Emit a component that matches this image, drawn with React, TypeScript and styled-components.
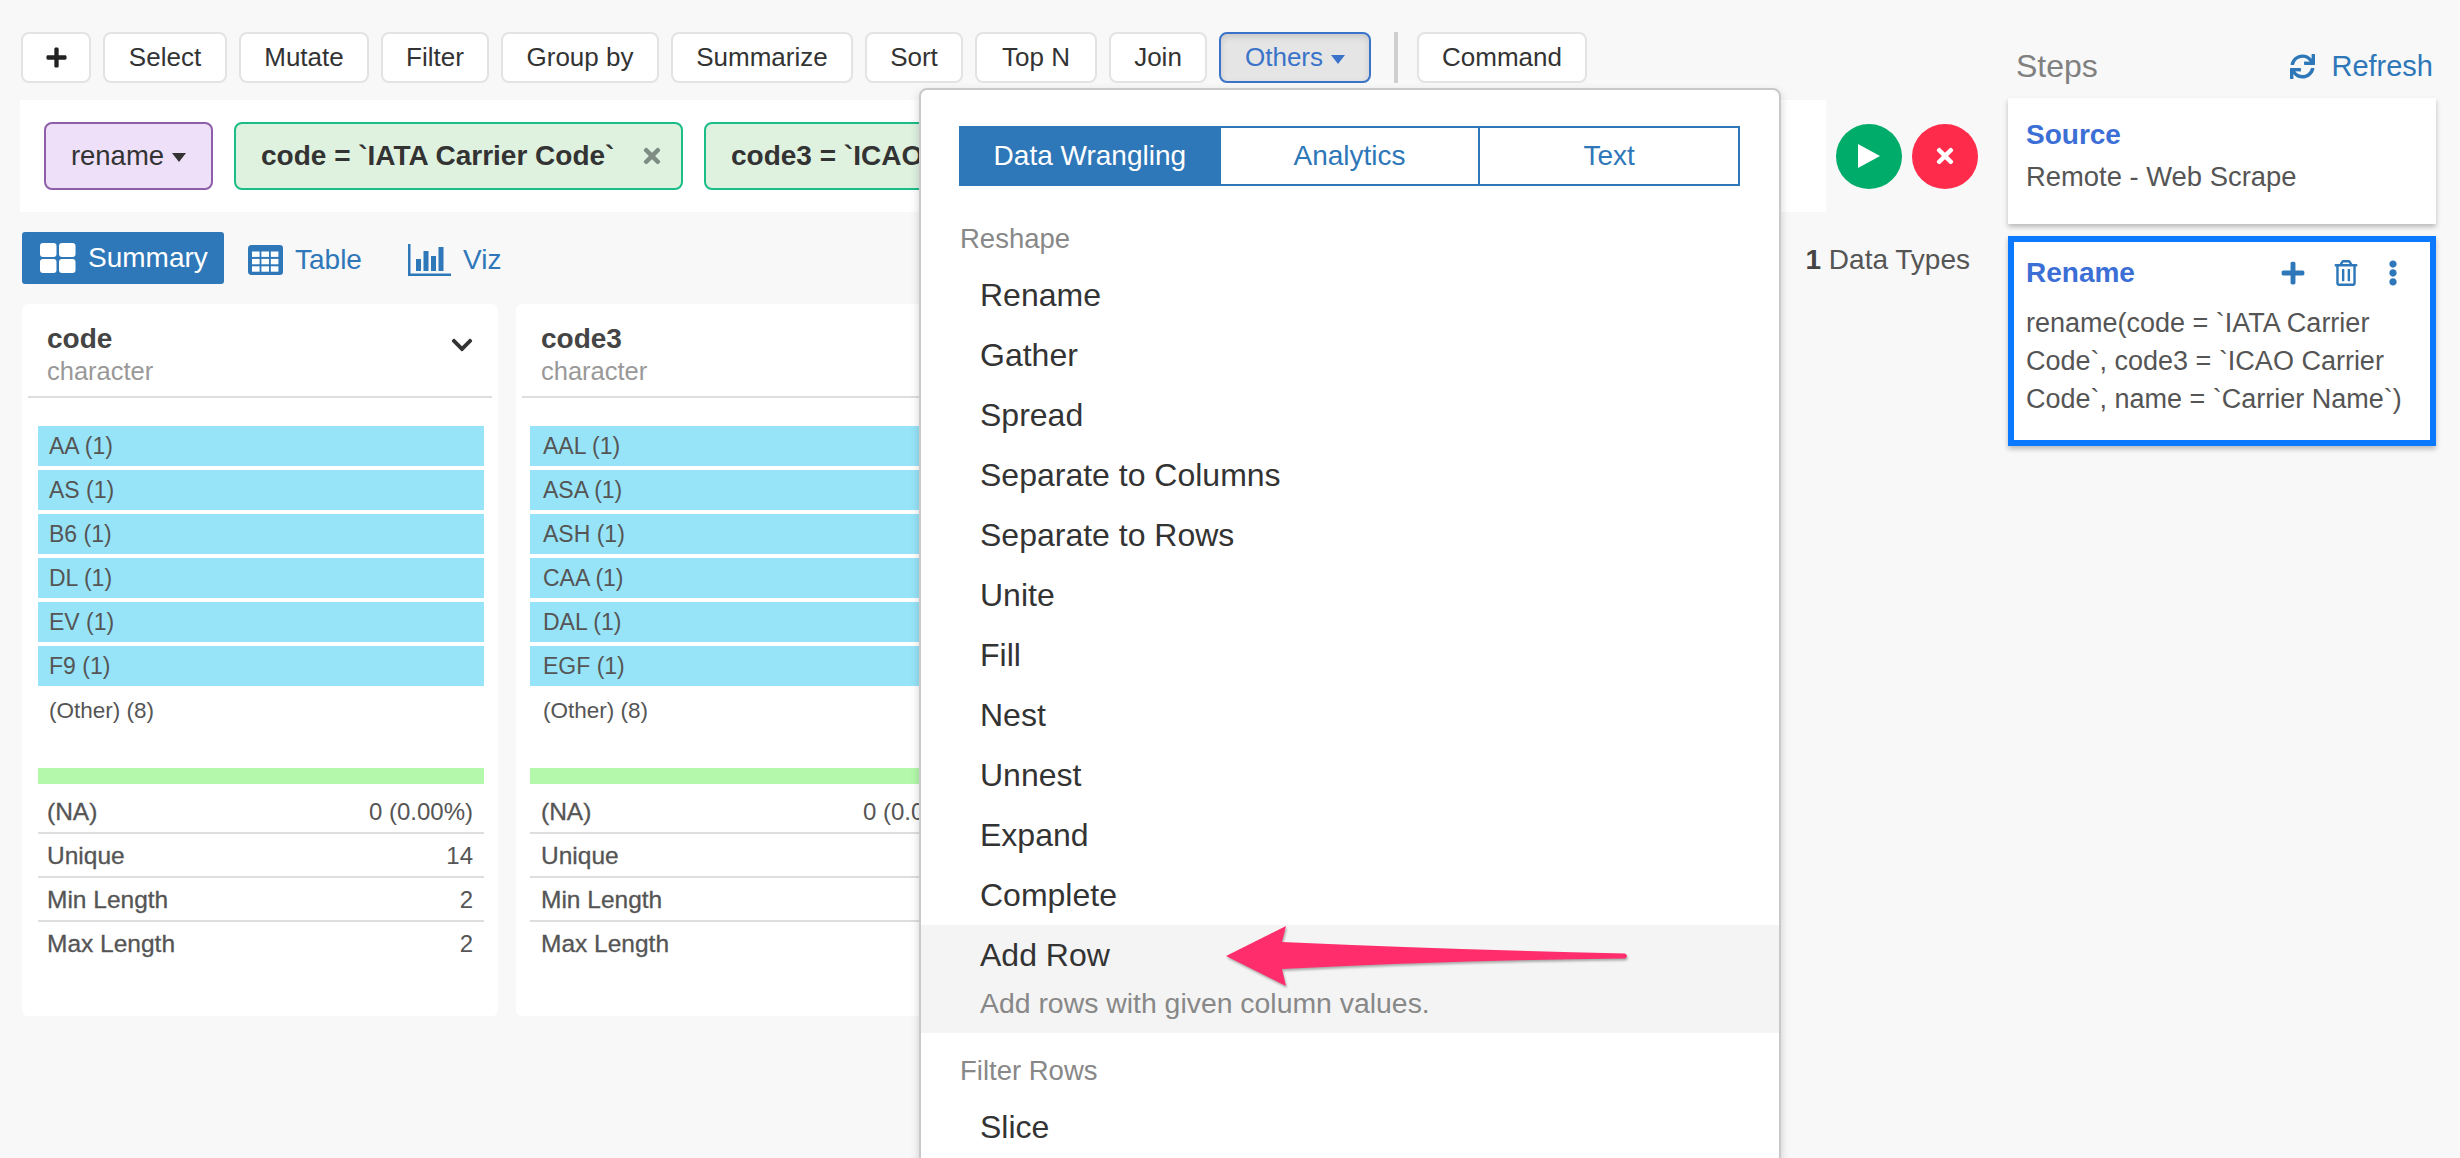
import React from "react";
import styled, { createGlobalStyle } from "styled-components";
import { FaPlus, FaTimes, FaChevronDown, FaSync, FaRegTrashAlt, FaEllipsisV } from "react-icons/fa";

const Global = createGlobalStyle`
  html, body { margin: 0; padding: 0; background: #f8f8f8; }
  body { font-family: "Liberation Sans", Arial, sans-serif; color: #333; }
  * { box-sizing: border-box; }
`;

const Page = styled.div`
  position: relative;
  display: flex;
  width: 2460px;
  height: 1158px;
  overflow: hidden;
  background: #f8f8f8;
`;
const Main = styled.div`
  width: 1988px;
  padding: 32px 0 0 20px;
  flex: none;
`;
const Toolbar = styled.div`
  display: flex;
  align-items: center;
  gap: 12px;
  padding-left: 1px;
  height: 51px;
`;
const ToolButton = styled.div<{ $active?: boolean; $w: number }>`
  width: ${(p) => p.$w}px;
  height: 51px;
  display: flex;
  align-items: center;
  justify-content: center;
  gap: 8px;
  font-size: 26px;
  border-radius: 8px;
  border: 2px solid ${(p) => (p.$active ? "#3a73c9" : "#e3e3e3")};
  background: ${(p) => (p.$active ? "#e5e5e5" : "#fff")};
  color: ${(p) => (p.$active ? "#3a73c9" : "#333")};
  box-shadow: ${(p) => (p.$active ? "inset 0 3px 6px rgba(0,0,0,.13)" : "none")};
`;
const Caret = styled.span<{ $c: string }>`
  display: inline-block;
  margin-top: 3px;
  border-left: 7.5px solid transparent;
  border-right: 7.5px solid transparent;
  border-top: 9px solid ${(p) => p.$c};
`;
const Sep = styled.div`
  width: 4px;
  height: 51px;
  margin: 0 7px 0 11px;
  background: #cfcfcf;
`;
const FilterRow = styled.div`
  display: flex;
  align-items: center;
  margin-top: 17px;
`;
const FilterPanel = styled.div`
  width: 1806px;
  height: 112px;
  padding: 22px 24px;
  background: #fff;
  display: flex;
  gap: 21px;
  overflow: hidden;
  flex: none;
`;
const VerbChip = styled.div`
  width: 169px;
  height: 68px;
  flex: none;
  display: flex;
  align-items: center;
  justify-content: center;
  gap: 8px;
  font-size: 27.5px;
  background: #eee0f9;
  border: 2px solid #8e5ea8;
  border-radius: 8px;
  color: #333;
`;
const ArgChip = styled.div<{ $w: number }>`
  width: ${(p) => p.$w}px;
  height: 68px;
  flex: none;
  display: flex;
  align-items: center;
  justify-content: space-between;
  padding: 0 17.5px 0 25px;
  font-size: 28px;
  font-weight: 700;
  color: #333;
  background: #dff2e0;
  border: 2px solid #1abc88;
  border-radius: 8px;
  white-space: nowrap;
`;
const ChipClose = styled(FaTimes)`
  color: #7f8c84;
  font-size: 24px;
  flex: none;
`;
const RunButton = styled.div<{ $bg: string; $ml: number }>`
  width: 66px;
  height: 65px;
  border-radius: 50%;
  flex: none;
  margin-left: ${(p) => p.$ml}px;
  background: ${(p) => p.$bg};
  display: flex;
  align-items: center;
  justify-content: center;
  color: #fff;
  font-size: 24px;
`;
const ViewRow = styled.div`
  display: flex;
  align-items: center;
  height: 52px;
  margin-top: 20px;
  padding-left: 2px;
`;
const ViewTab = styled.div<{ $active?: boolean; $w: number; $ml?: number }>`
  width: ${(p) => p.$w}px;
  height: 52px;
  margin-left: ${(p) => p.$ml ?? 0}px;
  padding: ${(p) => (p.$active ? "0 0 0 18px" : "3px 0 0 0")};
  display: flex;
  align-items: center;
  gap: 12px;
  font-size: 28px;
  border-radius: 3px;
  background: ${(p) => (p.$active ? "#2e77b8" : "transparent")};
  color: ${(p) => (p.$active ? "#fff" : "#2e77b8")};
`;
const TypesCount = styled.div`
  margin-left: auto;
  margin-right: 18px;
  padding-top: 4px;
  font-size: 28px;
  color: #555;
  white-space: nowrap;
  & b { color: #444; }
`;
const Cards = styled.div`
  display: flex;
  gap: 18px;
  margin-top: 20px;
  padding-left: 2px;
`;
const Card = styled.div`
  width: 476px;
  height: 712px;
  flex: none;
  background: #fff;
  border-radius: 6px;
  padding: 0 6px;
`;
const CardHead = styled.div`
  position: relative;
  height: 94px;
  border-bottom: 2px solid #dedede;
  padding: 19px 0 0 19px;
`;
const CardTitle = styled.div`
  font-size: 28px;
  line-height: 32px;
  font-weight: 700;
  color: #444;
`;
const CardType = styled.div`
  font-size: 25.5px;
  line-height: 33px;
  color: #999;
`;
const CardChevron = styled(FaChevronDown)`
  position: absolute;
  right: 18px;
  top: 29px;
  font-size: 24px;
  color: #333;
`;
const CardBody = styled.div<{ $inset: number }>`
  --inset: ${(p) => p.$inset}px;
  padding: 28px 8px 0 ${(p) => 10 - p.$inset}px;
`;
const Bar = styled.div`
  height: 40px;
  margin-bottom: 4px;
  padding-left: calc(11px + var(--inset));
  background: #97e4f8;
  font-size: 23px;
  line-height: 40px;
  color: #555;
`;
const OtherRow = styled.div`
  height: 40px;
  padding-left: calc(11px + var(--inset));
  font-size: 22.5px;
  line-height: 42px;
  color: #555;
`;
const NaBar = styled.div`
  height: 16px;
  margin-top: 38px;
  background: #b4f8ac;
`;
const StatList = styled.div`
  margin-top: 6px;
`;
const StatRow = styled.div<{ $last?: boolean }>`
  height: 44px;
  display: flex;
  align-items: center;
  justify-content: space-between;
  padding: ${(p) => (p.$last ? "0" : "2px")} 11px 0 calc(9px + var(--inset));
  font-size: 24px;
  color: #555;
  border-bottom: ${(p) => (p.$last ? "none" : "2px solid #dedede")};
`;
const StatLabel = styled.span`
  font-size: 24.5px;
  -webkit-text-stroke: 0.3px #555;
`;
const Aside = styled.div`
  width: 428px;
  margin-left: 20px;
  flex: none;
  padding-top: 47px;
`;
const AsideHead = styled.div`
  display: flex;
  align-items: center;
  justify-content: space-between;
  height: 38px;
  padding: 0 3px 0 8px;
  margin-bottom: 13px;
`;
const StepsTitle = styled.div`
  font-size: 32px;
  color: #808080;
`;
const RefreshLink = styled.div`
  display: flex;
  align-items: center;
  gap: 16px;
  font-size: 29px;
  color: #2e77b8;
`;
const StepCard = styled.div<{ $selected?: boolean; $h: number }>`
  height: ${(p) => p.$h}px;
  margin-bottom: 12px;
  padding: ${(p) => (p.$selected ? "13px 12px" : "19px 18px")};
  background: #fff;
  border: ${(p) => (p.$selected ? "6px solid #0a78ff" : "none")};
  box-shadow: 0 3px 5px rgba(0, 0, 0, 0.25);
`;
const StepHead = styled.div`
  display: flex;
  align-items: center;
  justify-content: space-between;
  height: 36px;
`;
const StepTitle = styled.div`
  font-size: 28px;
  font-weight: 700;
  color: #3b6fd6;
`;
const StepIcons = styled.div`
  display: flex;
  align-items: center;
  color: #2e77b8;
  font-size: 26px;
  gap: 26.5px;
  padding-right: 12.5px;
`;
const StepDots = styled(FaEllipsisV)`
  margin-left: -5.5px;
`;
const StepText = styled.div<{ $mt: number; $fs: number }>`
  font-size: ${(p) => p.$fs}px;
  line-height: 38px;
  color: #555;
  margin-top: ${(p) => p.$mt}px;
`;
const Menu = styled.div`
  position: absolute;
  left: 919px;
  top: 88px;
  width: 862px;
  height: 1100px;
  background: #fff;
  border: 2px solid #c9c9c9;
  border-radius: 8px;
  box-shadow: 0 4px 10px rgba(0, 0, 0, 0.18);
  padding-top: 36px;
`;
const MenuTabs = styled.div`
  display: flex;
  height: 60px;
  margin: 0 39px 0 38px;
  border: 2px solid #2e77b8;
`;
const MenuTab = styled.div<{ $active?: boolean }>`
  flex: 1;
  display: flex;
  align-items: center;
  justify-content: center;
  font-size: 28px;
  background: ${(p) => (p.$active ? "#2e77b8" : "#fff")};
  color: ${(p) => (p.$active ? "#fff" : "#2e77b8")};
  & + & { border-left: 2px solid #2e77b8; }
`;
const GroupLabel = styled.div<{ $mt: number }>`
  height: 36px;
  line-height: 36px;
  margin-top: ${(p) => p.$mt}px;
  margin-bottom: 8px;
  padding-left: 39px;
  font-size: 27.5px;
  color: #888;
`;
const MenuItem = styled.div`
  height: 60px;
  line-height: 60px;
  padding-left: 59px;
  font-size: 32px;
  color: #333;
`;
const MenuItemHot = styled.div`
  height: 108px;
  background: #f4f4f4;
  padding-left: 59px;
`;
const HotTitle = styled.div`
  height: 60px;
  line-height: 60px;
  font-size: 32px;
  color: #333;
`;
const HotDesc = styled.div`
  height: 36px;
  line-height: 36px;
  font-size: 28.4px;
  color: #888;
`;
const ArrowMark = styled.svg`
  position: absolute;
  left: 1220px;
  top: 920px;
  filter: drop-shadow(1px 2px 1px rgba(0, 0, 0, 0.3));
`;

const SummaryIcon = () => (
  <svg width="36" height="30" viewBox="0 0 36 30" fill="#fff">
    <rect x="0" y="0" width="16.5" height="14" rx="3" />
    <rect x="19" y="0" width="16.5" height="14" rx="3" />
    <rect x="0" y="16" width="16.5" height="14" rx="3" />
    <rect x="19" y="16" width="16.5" height="14" rx="3" />
  </svg>
);
const TableIcon = () => (
  <svg width="35" height="30" viewBox="0 0 35 30" fill="none">
    <rect x="1.2" y="1.2" width="32.6" height="27.6" rx="2" stroke="#2e77b8" strokeWidth="2.4" fill="#2e77b8" />
    {[0, 1, 2].map((r) =>
      [0, 1, 2].map((c) => (
        <rect key={`${r}-${c}`} x={4 + c * 9.4} y={6.5 + r * 7.4} width="7.6" height="5.4" fill="#fff" />
      ))
    )}
  </svg>
);
const ChartIcon = () => (
  <svg width="43" height="32" viewBox="0 0 43 32" fill="#2e77b8">
    <rect x="0" y="0" width="2.5" height="32" />
    <rect x="0" y="29.5" width="43" height="2.5" />
    <rect x="8" y="15" width="5" height="12" />
    <rect x="15.5" y="7" width="5" height="20" />
    <rect x="23" y="12" width="5" height="15" />
    <rect x="30.5" y="3" width="5" height="24" />
  </svg>
);
const PlayIcon = () => (
  <svg width="22" height="24" viewBox="0 0 22 24">
    <path d="M0 0 L22 12 L0 24 Z" fill="#fff" />
  </svg>
);

const tools: [string, number][] = [
  ["Select", 124], ["Mutate", 130], ["Filter", 108], ["Group by", 158],
  ["Summarize", 182], ["Sort", 98], ["Top N", 122], ["Join", 98],
];

const items = ["Rename", "Gather", "Spread", "Separate to Columns", "Separate to Rows", "Unite", "Fill", "Nest", "Unnest", "Expand", "Complete"];

const SummaryCard = ({ name, values, inset }: { name: string; values: string[]; inset: number }) => (
  <Card>
    <CardHead>
      <CardTitle>{name}</CardTitle>
      <CardType>character</CardType>
      {name === "code" && <CardChevron />}
    </CardHead>
    <CardBody $inset={inset}>
      {values.map((v) => <Bar key={v}>{v} (1)</Bar>)}
      <OtherRow>(Other) (8)</OtherRow>
      <NaBar />
      <StatList>
        <StatRow><StatLabel>(NA)</StatLabel><span>0 (0.00%)</span></StatRow>
        <StatRow><StatLabel>Unique</StatLabel><span>14</span></StatRow>
        <StatRow><StatLabel>Min Length</StatLabel><span>2</span></StatRow>
        <StatRow $last><StatLabel>Max Length</StatLabel><span>2</span></StatRow>
      </StatList>
    </CardBody>
  </Card>
);

export default function App() {
  return (
    <Page>
      <Global />
      <Main>
        <Toolbar>
          <ToolButton $w={70}><FaPlus size={23} color="#222" /></ToolButton>
          {tools.map(([t, w]) => <ToolButton key={t} $w={w}>{t}</ToolButton>)}
          <ToolButton $w={152} $active>Others <Caret $c="#3a73c9" /></ToolButton>
          <Sep />
          <ToolButton $w={170}>Command</ToolButton>
        </Toolbar>
        <FilterRow>
          <FilterPanel>
            <VerbChip>rename <Caret $c="#333" /></VerbChip>
            <ArgChip $w={449}>code = `IATA Carrier Code` <ChipClose /></ArgChip>
            <ArgChip $w={449}>code3 = `ICAO Carrier Code` <ChipClose /></ArgChip>
          </FilterPanel>
          <RunButton $bg="#00ac69" $ml={10}><PlayIcon /></RunButton>
          <RunButton $bg="#ff2b4b" $ml={10}><FaTimes /></RunButton>
        </FilterRow>
        <ViewRow>
          <ViewTab $active $w={202}><SummaryIcon /> Summary</ViewTab>
          <ViewTab $w={127} $ml={24}><TableIcon /> Table</ViewTab>
          <ViewTab $w={112} $ml={33}><ChartIcon /> Viz</ViewTab>
          <TypesCount><b>1</b> Data Types</TypesCount>
        </ViewRow>
        <Cards>
          <SummaryCard name="code" inset={0} values={["AA", "AS", "B6", "DL", "EV", "F9"]} />
          <SummaryCard name="code3" inset={2} values={["AAL", "ASA", "ASH", "CAA", "DAL", "EGF"]} />
        </Cards>
      </Main>
      <Aside>
        <AsideHead>
          <StepsTitle>Steps</StepsTitle>
          <RefreshLink><FaSync size={25} /> Refresh</RefreshLink>
        </AsideHead>
        <StepCard $h={126}>
          <StepHead><StepTitle>Source</StepTitle></StepHead>
          <StepText $mt={5} $fs={27.4}>Remote - Web Scrape</StepText>
        </StepCard>
        <StepCard $h={210} $selected>
          <StepHead>
            <StepTitle>Rename</StepTitle>
            <StepIcons><FaPlus /><FaRegTrashAlt /><StepDots /></StepIcons>
          </StepHead>
          <StepText $mt={13} $fs={27}>rename(code = `IATA Carrier Code`, code3 = `ICAO Carrier Code`, name = `Carrier Name`)</StepText>
        </StepCard>
      </Aside>
      <Menu>
        <MenuTabs>
          <MenuTab $active>Data Wrangling</MenuTab>
          <MenuTab>Analytics</MenuTab>
          <MenuTab>Text</MenuTab>
        </MenuTabs>
        <GroupLabel $mt={35}>Reshape</GroupLabel>
        {items.map((i) => <MenuItem key={i}>{i}</MenuItem>)}
        <MenuItemHot>
          <HotTitle>Add Row</HotTitle>
          <HotDesc>Add rows with given column values.</HotDesc>
        </MenuItemHot>
        <GroupLabel $mt={20}>Filter Rows</GroupLabel>
        <MenuItem>Slice</MenuItem>
      </Menu>
      <ArrowMark width="416" height="72" viewBox="0 0 416 72">
        <path d="M6 36 L66 6 L62 22 Q240 30 405 33.5 Q409 36 405 38.5 Q240 40 62 49 L66 66 Z" fill="#ff2d6b" />
      </ArrowMark>
    </Page>
  );
}
